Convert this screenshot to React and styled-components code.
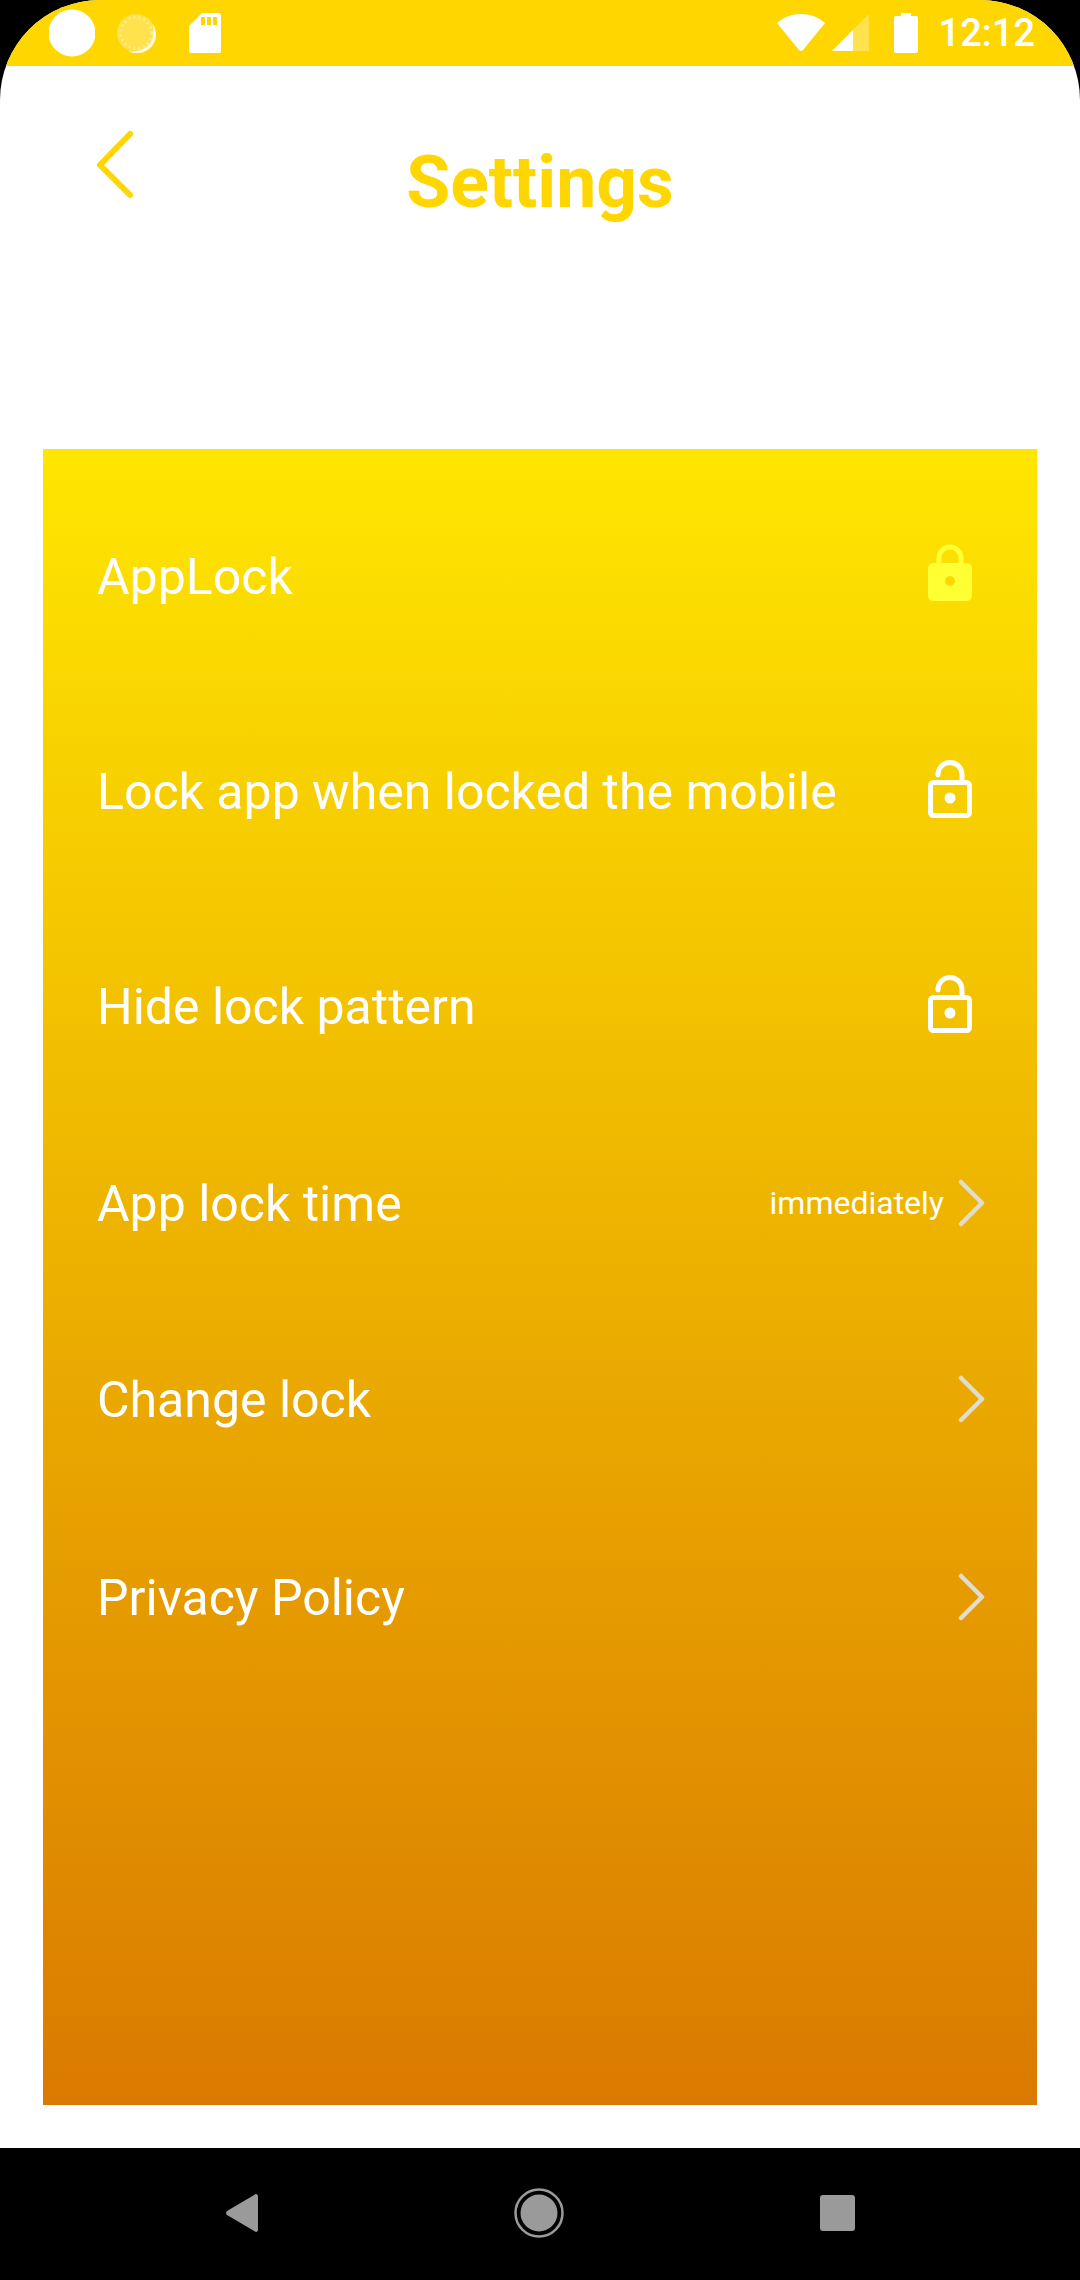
import styled, { createGlobalStyle } from 'styled-components';

const GlobalStyle = createGlobalStyle`
  html, body {
    margin: 0;
    padding: 0;
    background: #000;
  }
  * {
    box-sizing: border-box;
  }
`;

const Screen = styled.div`
  width: 1080px;
  height: 2280px;
  display: flex;
  flex-direction: column;
  background: #fff;
  border-radius: 100px 100px 0 0;
  overflow: hidden;
  font-family: Roboto, "Liberation Sans", sans-serif;
`;

const StatusBar = styled.div`
  height: 66px;
  flex: none;
  background: #ffd600;
  display: flex;
  align-items: center;
  padding: 0 45px 0 49px;
`;

const StatusGroup = styled.div`
  display: flex;
  align-items: center;
  gap: ${(props) => props.$gap}px;
  flex: ${(props) => (props.$grow ? 1 : 'none')};
`;

const Clock = styled.span`
  color: #fff;
  font-size: 38px;
  font-weight: 500;
  line-height: 66px;
  margin-left: 14px;
`;

const Header = styled.header`
  height: 383px;
  flex: none;
  display: grid;
  grid-template-columns: 1fr auto 1fr;
  align-items: start;
`;

const BackIcon = styled.svg`
  width: 48px;
  height: 76px;
  margin: 61px 0 0 90px;
  color: #ffd600;
`;

const Title = styled.h1`
  margin: 77px 0 0;
  color: #ffd600;
  font-size: 71.5px;
  font-weight: 700;
  line-height: 80px;
`;

const Card = styled.section`
  width: 994px;
  height: 1656px;
  flex: none;
  margin-left: 43px;
  padding: 68px 54px 0;
  background: linear-gradient(180deg, #ffe600 0%, #da7a00 100%);
`;

const Row = styled.div`
  height: 120px;
  margin-top: ${(props) => props.$offset}px;
  display: flex;
  align-items: center;
  justify-content: space-between;
`;

const Label = styled.span`
  color: #fff;
  font-size: 50px;
  line-height: 60px;
`;

const RowEnd = styled.div`
  display: flex;
  align-items: center;
  gap: 14px;
  margin: 0 -2px 3px 0;
`;

const Hint = styled.span`
  color: #fff;
  font-size: 32px;
  line-height: 40px;
`;

const LockIcon = styled.svg`
  width: 44px;
  height: 58px;
  margin: 0 11px ${(props) => props.$lift}px 0;
  display: block;
`;

const Chevron = styled.svg`
  width: 27px;
  height: 48px;
  display: block;
`;

const NavBar = styled.nav`
  margin-top: 43px;
  flex: 1;
  background: #000;
  display: flex;
  align-items: center;
  justify-content: space-between;
  padding: 0 225px 2px 226px;
`;

const StatusIcon = styled.svg`
  display: block;
  flex: none;
  margin-left: ${(props) => props.$shift || 0}px;
`;

const NavIcon = styled.svg`
  display: block;
  flex: none;
`;

const ClosedLock = () => (
  <LockIcon $lift={10} viewBox="0 0 44 58">
    <path d="M11 24V15a11 11 0 0 1 22 0v9" fill="none" stroke="#ffff33" strokeWidth="5" />
    <rect x="0" y="20" width="44" height="38" rx="5" fill="#ffff33" />
    <circle cx="22" cy="38" r="5" fill="#ffd800" />
  </LockIcon>
);

const OpenLock = () => (
  <LockIcon $lift={7} viewBox="0 0 44 58">
    <path d="M10 15a12 12 0 0 1 24 -1v8" fill="none" stroke="#fff" strokeWidth="5" strokeLinecap="round" />
    <rect x="2.5" y="22.5" width="39" height="33" rx="3" fill="none" stroke="#fff" strokeWidth="5" />
    <circle cx="22" cy="38" r="5.5" fill="#fff" />
  </LockIcon>
);

const RowChevron = () => (
  <Chevron viewBox="0 0 27 48">
    <path d="M3 3l21 21L3 45" fill="none" stroke="#e0dcd0" strokeWidth="4.5" strokeLinecap="round" strokeLinejoin="round" />
  </Chevron>
);

const App = () => {
  return (
    <>
      <GlobalStyle />
      <Screen>
        <StatusBar>
          <StatusGroup $grow $gap={21}>
            <StatusIcon width="46" height="48" viewBox="0 0 46 48">
              <circle cx="23" cy="24" r="23.5" fill="#fff" />
            </StatusIcon>
            {/* sync spinner: faint disc, dotted ring, bright crescent low on the right */}
            <StatusIcon width="40" height="40" viewBox="0 0 40 40">
              <circle cx="20" cy="20" r="19" fill="#fff" opacity="0.3" />
              <circle cx="20" cy="20" r="15.500" fill="none" stroke="#fff" strokeWidth="3" strokeDasharray="2 3" opacity="0.35" />
              <path d="M37 11a19 19 0 0 1-25 27c9 2 20-2 24-11 1.500-5 2-11 1-16z" fill="#fff" opacity="0.9" />
            </StatusIcon>
            <StatusIcon $shift={12} width="32" height="40" viewBox="0 0 32 40">
              <path d="M13 0h17a2 2 0 0 1 2 2v36a2 2 0 0 1-2 2H2a2 2 0 0 1-2-2V13z" fill="#fff" />
              <path d="M12 4h4v8h-4zM18 4h4v8h-4zM24 4h4v8h-4z" fill="#ffd600" />
            </StatusIcon>
          </StatusGroup>
          <StatusGroup $gap={7}>
            <StatusIcon width="48" height="38" viewBox="0 0 48 38">
              <path d="M0 9C7 3 15 0 24 0s17 3 24 9L26 36a2.500 2.500 0 0 1-4 0z" fill="#fff" />
            </StatusIcon>
            <StatusIcon width="38" height="38" viewBox="0 0 38 38">
              <path d="M37 0v37H19V18z" fill="#fff" opacity="0.3" />
              <path d="M21 16v21H0z" fill="#fff" />
            </StatusIcon>
            <StatusIcon $shift={17} width="24" height="40" viewBox="0 0 24 40">
              <path d="M7 0h10v3h5a2 2 0 0 1 2 2v33a2 2 0 0 1-2 2H2a2 2 0 0 1-2-2V5a2 2 0 0 1 2-2h5z" fill="#fff" />
            </StatusIcon>
            <Clock>12:12</Clock>
          </StatusGroup>
        </StatusBar>

        <Header>
          <BackIcon viewBox="0 0 48 76">
            <path d="M40 7L10 38l30 30" fill="none" stroke="currentColor" strokeWidth="6" strokeLinecap="round" strokeLinejoin="round" />
          </BackIcon>
          <Title>Settings</Title>
        </Header>

        <Card>
          <Row $offset={0}>
            <Label>AppLock</Label>
            <ClosedLock />
          </Row>
          <Row $offset={95}>
            <Label>Lock app when locked the mobile</Label>
            <OpenLock />
          </Row>
          <Row $offset={95}>
            <Label>Hide lock pattern</Label>
            <OpenLock />
          </Row>
          <Row $offset={77}>
            <Label>App lock time</Label>
            <RowEnd>
              <Hint>immediately</Hint>
              <RowChevron />
            </RowEnd>
          </Row>
          <Row $offset={76}>
            <Label>Change lock</Label>
            <RowEnd>
              <RowChevron />
            </RowEnd>
          </Row>
          <Row $offset={78}>
            <Label>Privacy Policy</Label>
            <RowEnd>
              <RowChevron />
            </RowEnd>
          </Row>
        </Card>

        <NavBar>
          <NavIcon width="32" height="38" viewBox="0 0 32 38">
            <path d="M32 2.500v33c0 2-1.500 3-3 2L1 21c-1.300-1-1.300-3 0-4L29 .5c1.500-1 3 0 3 2z" fill="#9a9a9a" />
          </NavIcon>
          <NavIcon width="50" height="50" viewBox="0 0 50 50">
            <circle cx="25" cy="25" r="23.500" fill="none" stroke="#9a9a9a" strokeWidth="2.500" />
            <circle cx="25" cy="25" r="18.500" fill="#9a9a9a" />
          </NavIcon>
          <NavIcon width="35" height="36" viewBox="0 0 35 36">
            <rect width="35" height="36" rx="3" fill="#9a9a9a" />
          </NavIcon>
        </NavBar>
      </Screen>
    </>
  );
};

export default App;
